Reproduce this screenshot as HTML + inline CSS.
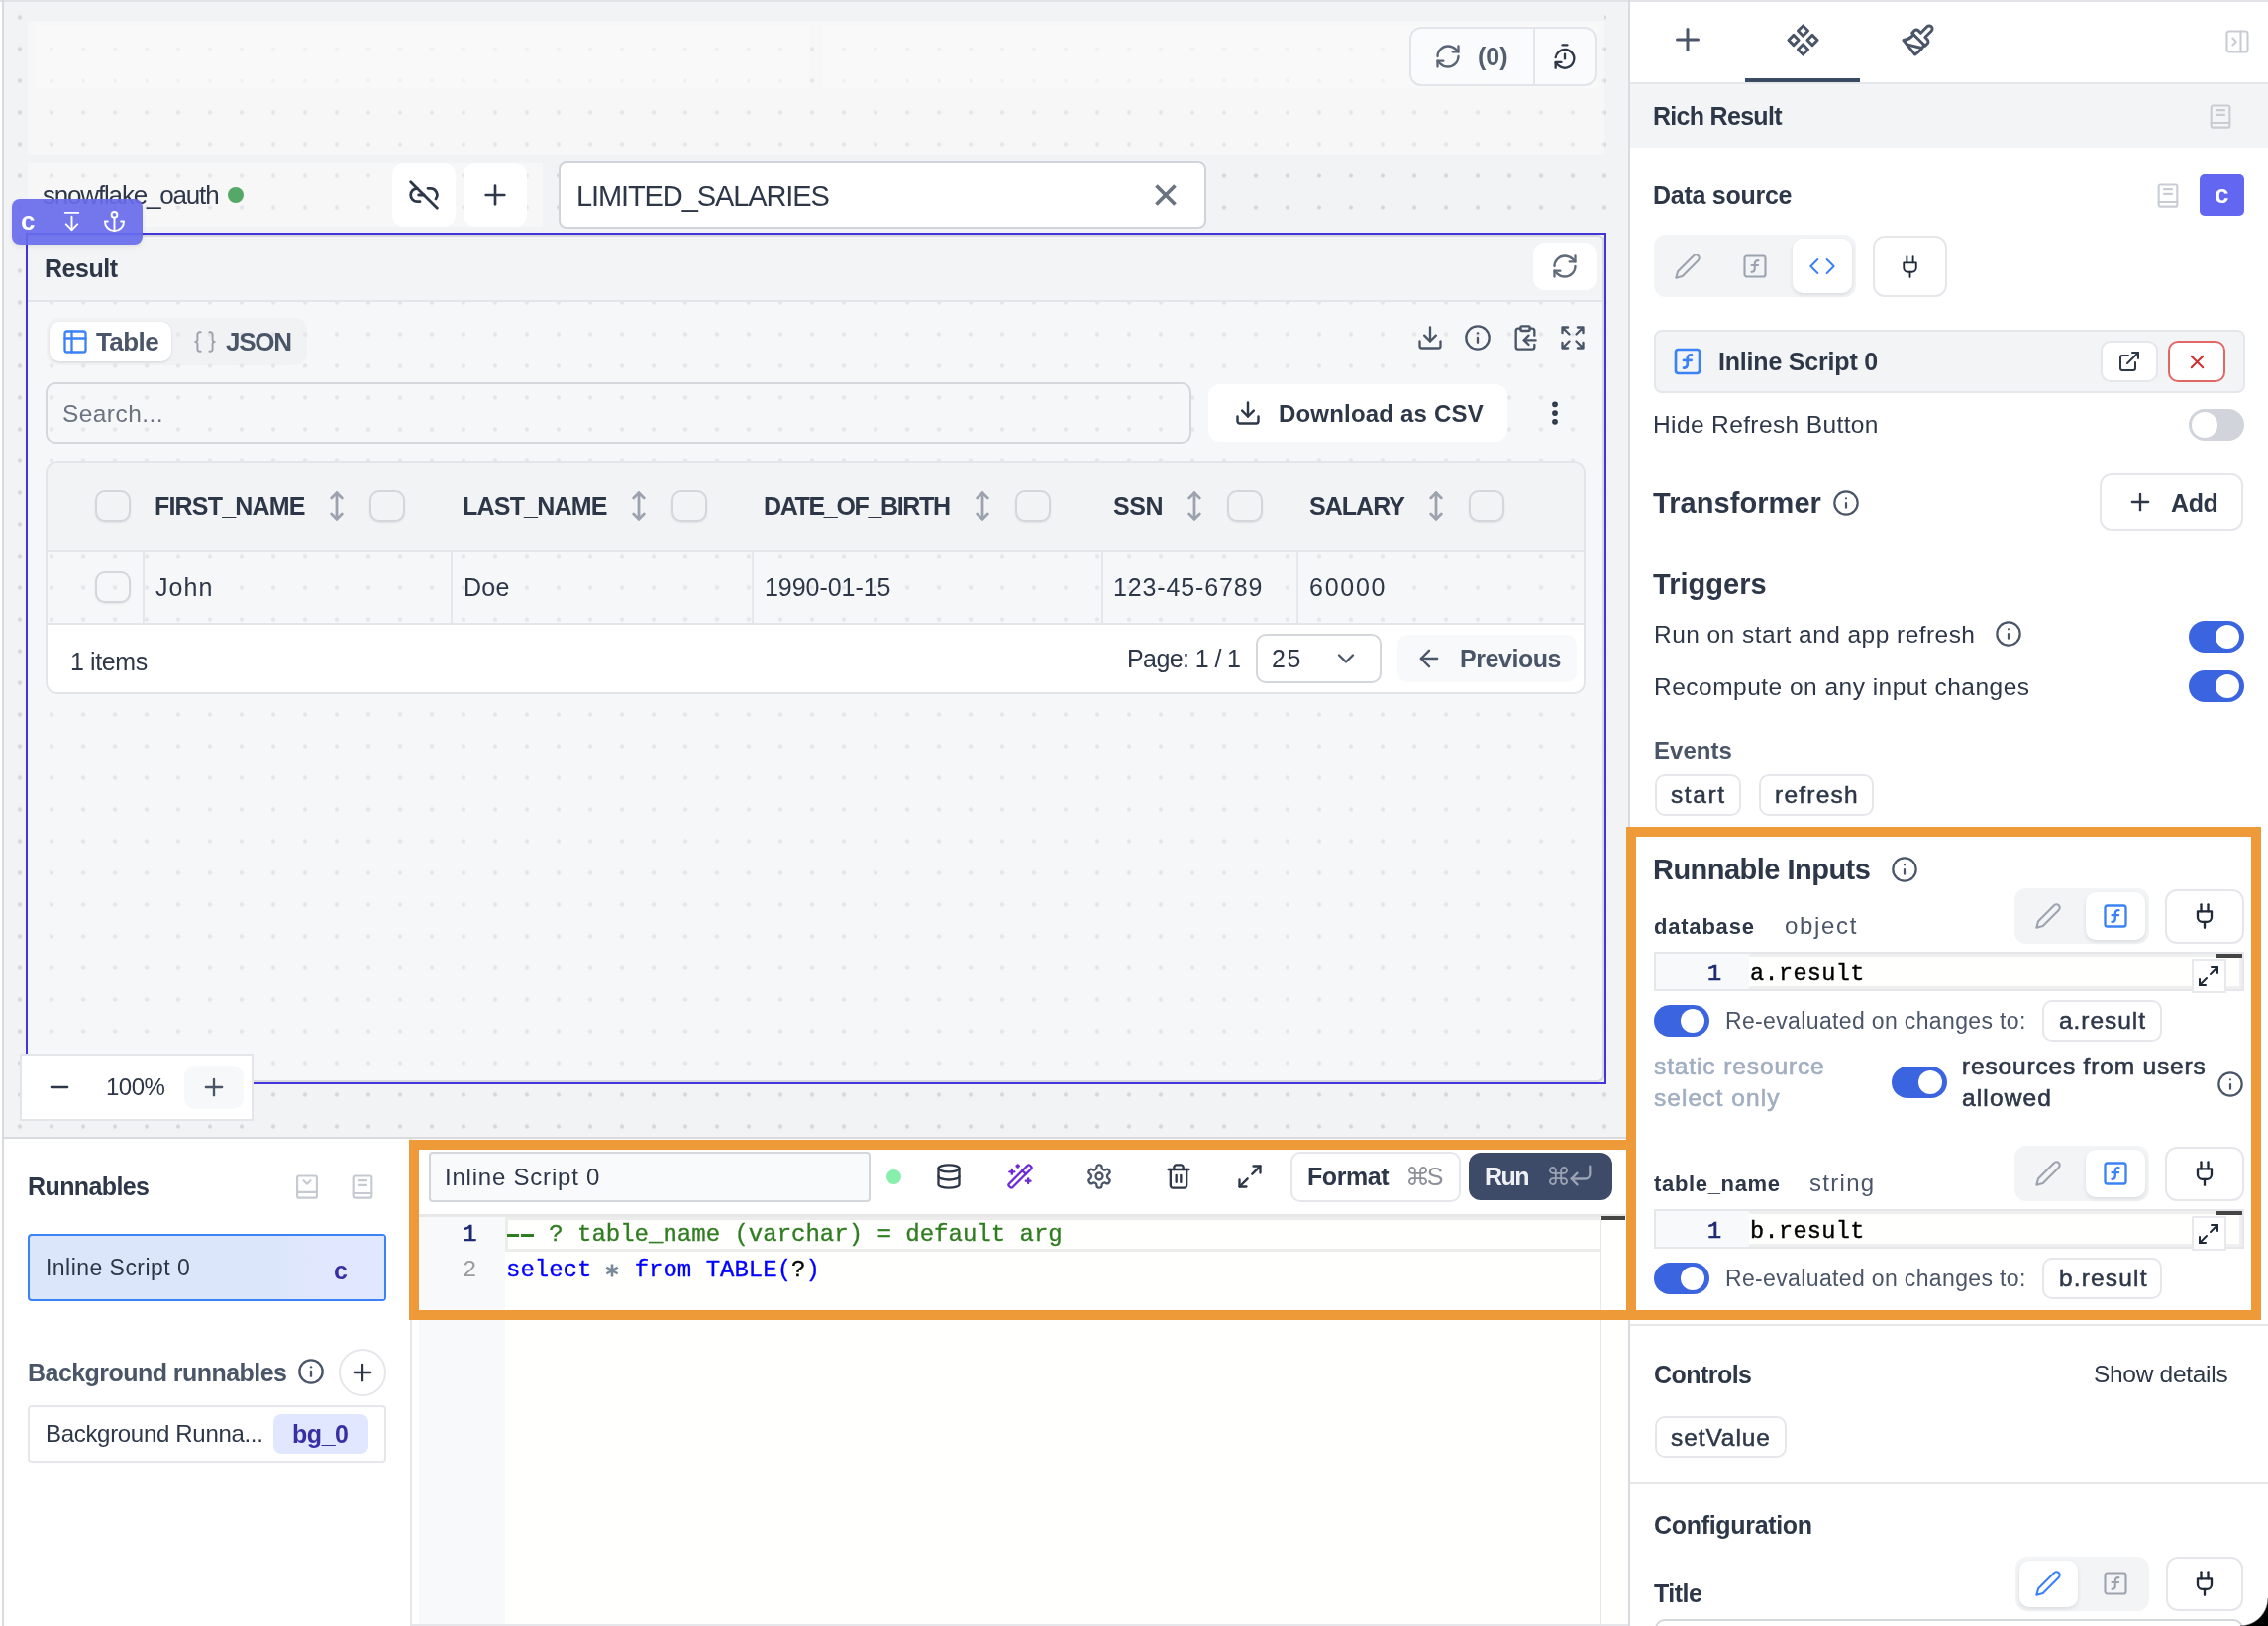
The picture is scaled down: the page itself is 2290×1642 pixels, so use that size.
<!DOCTYPE html><html><head><meta charset="utf-8"><style>
*{margin:0;padding:0;box-sizing:border-box}
html,body{width:2290px;height:1642px;overflow:hidden;background:#fff}
body{position:relative;font-family:"Liberation Sans",sans-serif}
div,span,svg{position:absolute}
.t{line-height:1;white-space:nowrap;display:block;will-change:transform}
</style></head><body><div style="left:0px;top:0px;width:2290px;height:1.5px;background:#e1e3e7"></div>
<div style="left:2px;top:0px;width:2px;height:1642px;background:#d9dadd"></div>
<div style="left:4px;top:1.5px;width:1640px;height:1146.5px;background-color:#f2f3f5;background-image:radial-gradient(circle,#d5d6d8 0,#d5d6d8 1.4px,rgba(213,214,216,0) 2.7px);background-size:32px 32px;background-position:0 -0.5px"></div>
<div style="left:4px;top:1148px;width:1640px;height:2px;background:#dadbde"></div>
<div style="left:1644px;top:0px;width:2px;height:1642px;background:#d9dbdf"></div>
<div style="left:28px;top:1.5px;width:1592px;height:19.5px;background:#f2f3f5"></div>
<div style="left:28px;top:21px;width:1592px;height:136px;background:rgba(255,255,255,0.36)"></div>
<div style="left:36px;top:25px;width:781px;height:64px;background:rgba(252,252,252,0.5)"></div>
<div style="left:831px;top:25px;width:781px;height:64px;background:rgba(252,252,252,0.5)"></div>
<div style="left:28px;top:165px;width:520px;height:64px;background:rgba(255,255,255,0.36)"></div>
<div style="left:1422.5px;top:27px;width:189.5px;height:60px;border:2px solid #e2e5e9;border-radius:12px;background:rgba(250,251,252,0.85)"></div>
<div style="left:1548px;top:29px;width:2px;height:56px;background:#e2e5e9"></div>
<svg style="left:1448.0px;top:43.0px;" width="28" height="28" viewBox="0 0 24 24" fill="none" stroke="#5b6575" stroke-width="2" stroke-linecap="round" stroke-linejoin="round"><path d="M3 12a9 9 0 0 1 9-9 9.75 9.75 0 0 1 6.74 2.74L21 8"/><path d="M21 3v5h-5"/><path d="M21 12a9 9 0 0 1-9 9 9.75 9.75 0 0 1-6.74-2.74L3 16"/><path d="M8 16H3v5"/></svg>
<span id="t_zero" class="t" style="left:1492.0px;top:44.8px;font-size:25px;color:#525d6e;font-weight:700;letter-spacing:-0.031px;">(0)</span>
<svg style="left:1566.0px;top:43.0px;" width="28" height="28" viewBox="0 0 24 24" fill="none" stroke="#2d3748" stroke-width="2" stroke-linecap="round" stroke-linejoin="round"><path d="M10 2h4"/><path d="M12 14v-4"/><path d="M4 13a8 8 0 0 1 8-7 8 8 0 1 1-5.3 14L4 17.6"/><path d="M9 17H4v5"/></svg>
<span id="t_snow" class="t" style="left:43.4px;top:184.0px;font-size:26px;color:#2d3748;letter-spacing:-1.182px;">snowflake_oauth</span>
<div style="left:230px;top:189px;width:16px;height:16px;background:#56a866;border-radius:50%"></div>
<div style="left:396px;top:165px;width:64px;height:64px;background:#fff;border-radius:12px"></div>
<svg style="left:412.0px;top:181.0px;" width="32" height="32" viewBox="0 0 24 24" fill="none" stroke="#2d3748" stroke-width="2.1" stroke-linecap="round" stroke-linejoin="round"><path d="M9 17H7A5 5 0 0 1 7 7"/><path d="M15 7h2a5 5 0 0 1 4 8"/><line x1="8" x2="12" y1="12" y2="12"/><line x1="2" x2="22" y1="2" y2="22"/></svg>
<div style="left:468px;top:165px;width:64px;height:64px;background:#fff;border-radius:12px"></div>
<svg style="left:484.0px;top:181.0px;" width="32" height="32" viewBox="0 0 24 24" fill="none" stroke="#2d3748" stroke-width="2" stroke-linecap="round" stroke-linejoin="round"><path d="M5 12h14"/><path d="M12 5v14"/></svg>
<div style="left:564px;top:163px;width:654px;height:68px;background:#fff;border:2px solid #d0d4da;border-radius:8px"></div>
<span id="t_limited" class="t" style="left:582.3px;top:184.0px;font-size:29px;color:#2d3748;letter-spacing:-1.099px;">LIMITED_SALARIES</span>
<svg style="left:1157.8px;top:177.7px;" width="38" height="38" viewBox="0 0 24 24" fill="none" stroke="#6b7280" stroke-width="2.4" stroke-linecap="round" stroke-linejoin="round"><path stroke-linecap="butt" d="M18 6 6 18"/><path stroke-linecap="butt" d="m6 6 12 12"/></svg>
<div style="left:26px;top:235px;width:1596px;height:860px;border:2px solid #4335dc"></div>
<div style="left:28px;top:237px;width:1592px;height:856px;background:rgba(252,253,255,0.4);border:2px solid #d8dadd;border-left:0;border-radius:0 7px 7px 0"></div>
<div style="left:28px;top:239px;width:1590px;height:66px;background:#f3f4f6;border-bottom:2px solid #e3e5e8;border-top-right-radius:5px"></div>
<span id="t_result" class="t" style="left:44.5px;top:259.3px;font-size:25px;color:#2d3748;font-weight:700;letter-spacing:-0.483px;">Result</span>
<div style="left:1548px;top:245px;width:64px;height:48px;background:#fff;border-radius:12px"></div>
<svg style="left:1566.0px;top:254.8px;" width="28" height="28" viewBox="0 0 24 24" fill="none" stroke="#5f6b7a" stroke-width="2" stroke-linecap="round" stroke-linejoin="round"><path d="M3 12a9 9 0 0 1 9-9 9.75 9.75 0 0 1 6.74 2.74L21 8"/><path d="M21 3v5h-5"/><path d="M21 12a9 9 0 0 1-9 9 9.75 9.75 0 0 1-6.74-2.74L3 16"/><path d="M8 16H3v5"/></svg>
<div style="left:47px;top:321px;width:263px;height:48px;background:rgba(229,231,235,0.28);border-radius:12px"></div>
<div style="left:50px;top:325px;width:123px;height:40px;background:#fff;border-radius:10px;box-shadow:0 1px 3px rgba(0,0,0,0.12)"></div>
<svg style="left:62.0px;top:330.5px;" width="28" height="28" viewBox="0 0 24 24" fill="none" stroke="#3b82f6" stroke-width="2" stroke-linecap="round" stroke-linejoin="round"><rect width="18" height="18" x="3" y="3" rx="2"/><path d="M3 9h18"/><path d="M9 3v18"/></svg>
<span id="t_tab_table" class="t" style="left:97.4px;top:332.3px;font-size:26px;color:#4a5568;font-weight:700;letter-spacing:-0.596px;">Table</span>
<svg style="left:194.0px;top:331.5px;" width="26" height="26" viewBox="0 0 24 24" fill="none" stroke="#9ca3af" stroke-width="1.8" stroke-linecap="round" stroke-linejoin="round"><path d="M8 3H7a2 2 0 0 0-2 2v5a2 2 0 0 1-2 2 2 2 0 0 1 2 2v5c0 1.1.9 2 2 2h1"/><path d="M16 21h1a2 2 0 0 0 2-2v-5c0-1.1.9-2 2-2a2 2 0 0 1-2-2V5a2 2 0 0 0-2-2h-1"/></svg>
<span id="t_tab_json" class="t" style="left:228.4px;top:332.3px;font-size:26px;color:#4a5568;font-weight:700;letter-spacing:-1.237px;">JSON</span>
<svg style="left:1429.5px;top:327.0px;" width="28" height="28" viewBox="0 0 24 24" fill="none" stroke="#4a5568" stroke-width="2" stroke-linecap="round" stroke-linejoin="round"><path d="M21 15v4a2 2 0 0 1-2 2H5a2 2 0 0 1-2-2v-4"/><polyline points="7 10 12 15 17 10"/><line x1="12" x2="12" y1="15" y2="3"/></svg>
<svg style="left:1477.5px;top:327.0px;" width="28" height="28" viewBox="0 0 24 24" fill="none" stroke="#4a5568" stroke-width="2" stroke-linecap="round" stroke-linejoin="round"><circle cx="12" cy="12" r="10"/><path d="M12 16v-4"/><path d="M12 8h.01"/></svg>
<svg style="left:1526.0px;top:327.0px;" width="28" height="28" viewBox="0 0 24 24" fill="none" stroke="#4a5568" stroke-width="2" stroke-linecap="round" stroke-linejoin="round"><rect width="8" height="4" x="8" y="2" rx="1" ry="1"/><path d="M8 4H6a2 2 0 0 0-2 2v14a2 2 0 0 0 2 2h12a2 2 0 0 0 2-2v-2"/><path d="M16 4h2a2 2 0 0 1 2 2v4"/><path d="M21 14H11"/><path d="m15 10-4 4 4 4"/></svg>
<svg style="left:1574.0px;top:327.0px;" width="28" height="28" viewBox="0 0 24 24" fill="none" stroke="#4a5568" stroke-width="2" stroke-linecap="round" stroke-linejoin="round"><path d="m21 21-6-6m6 6v-4.8m0 4.8h-4.8"/><path d="M3 16.2V21m0 0h4.8M3 21l6-6"/><path d="M21 7.8V3m0 0h-4.8M21 3l-6 6"/><path d="M3 7.8V3m0 0h4.8M3 3l6 6"/></svg>
<div style="left:46px;top:386px;width:1157px;height:62px;border:2px solid #d4d7dc;border-radius:10px"></div>
<span id="t_search" class="t" style="left:63.0px;top:405.6px;font-size:24.5px;color:#6b7280;letter-spacing:0.425px;">Search...</span>
<div style="left:1220px;top:388px;width:302px;height:58px;background:#fff;border-radius:12px"></div>
<svg style="left:1246.0px;top:403.0px;" width="28" height="28" viewBox="0 0 24 24" fill="none" stroke="#2d3748" stroke-width="2.1" stroke-linecap="round" stroke-linejoin="round"><path d="M21 15v4a2 2 0 0 1-2 2H5a2 2 0 0 1-2-2v-4"/><polyline points="7 10 12 15 17 10"/><line x1="12" x2="12" y1="15" y2="3"/></svg>
<span id="t_csv" class="t" style="left:1291.1px;top:405.7px;font-size:24px;color:#2d3748;font-weight:700;letter-spacing:0.190px;">Download as CSV</span>
<svg style="left:1555.0px;top:402.0px;" width="30" height="30" viewBox="0 0 24 24" fill="none" stroke="#2d3748" stroke-width="2.6" stroke-linecap="round" stroke-linejoin="round"><circle cx="12" cy="12" r="1"/><circle cx="12" cy="5" r="1"/><circle cx="12" cy="19" r="1"/></svg>
<div style="left:46px;top:466px;width:1555px;height:235px;border:2px solid #e3e5e8;border-radius:12px"></div>
<div style="left:48px;top:468px;width:1551px;height:88px;background:#f2f3f5;border-top-left-radius:10px;border-top-right-radius:10px"></div>
<div style="left:48px;top:555px;width:1551px;height:2px;background:#e3e5e8"></div>
<div style="left:144px;top:557px;width:2px;height:73px;background:#e5e7eb"></div>
<div style="left:455px;top:557px;width:2px;height:73px;background:#e5e7eb"></div>
<div style="left:759px;top:557px;width:2px;height:73px;background:#e5e7eb"></div>
<div style="left:1112px;top:557px;width:2px;height:73px;background:#e5e7eb"></div>
<div style="left:1309px;top:557px;width:2px;height:73px;background:#e5e7eb"></div>
<div style="left:48px;top:629px;width:1551px;height:2px;background:#e3e5e8"></div>
<div style="left:48px;top:631px;width:1551px;height:68px;background:#fff;border-bottom-left-radius:10px;border-bottom-right-radius:10px"></div>
<div style="left:96px;top:495px;width:36px;height:32px;border:2px solid #d3d6db;border-radius:10px;box-shadow:0 1px 2px rgba(0,0,0,0.08)"></div>
<div style="left:96px;top:577px;width:36px;height:32px;border:2px solid #d3d6db;border-radius:10px;box-shadow:0 1px 2px rgba(0,0,0,0.08)"></div>
<span id="t_h0" class="t" style="left:156.0px;top:499.3px;font-size:25px;color:#2d3748;font-weight:700;letter-spacing:-0.804px;">FIRST_NAME</span>
<svg style="left:324.0px;top:495.0px;" width="32" height="32" viewBox="0 0 24 24" fill="none" stroke="#9ca3af" stroke-width="2.1" stroke-linecap="round" stroke-linejoin="round"><polyline points="8 18 12 22 16 18"/><polyline points="8 6 12 2 16 6"/><line x1="12" x2="12" y1="2" y2="22"/></svg>
<div style="left:372.5px;top:495px;width:36.0px;height:32px;border:2px solid #d3d6db;border-radius:10px;box-shadow:0 1px 2px rgba(0,0,0,0.08)"></div>
<span id="t_h1" class="t" style="left:466.5px;top:499.3px;font-size:25px;color:#2d3748;font-weight:700;letter-spacing:-0.787px;">LAST_NAME</span>
<svg style="left:628.5px;top:495.0px;" width="32" height="32" viewBox="0 0 24 24" fill="none" stroke="#9ca3af" stroke-width="2.1" stroke-linecap="round" stroke-linejoin="round"><polyline points="8 18 12 22 16 18"/><polyline points="8 6 12 2 16 6"/><line x1="12" x2="12" y1="2" y2="22"/></svg>
<div style="left:677.5px;top:495px;width:36.0px;height:32px;border:2px solid #d3d6db;border-radius:10px;box-shadow:0 1px 2px rgba(0,0,0,0.08)"></div>
<span id="t_h2" class="t" style="left:771.0px;top:499.3px;font-size:25px;color:#2d3748;font-weight:700;letter-spacing:-1.343px;">DATE_OF_BIRTH</span>
<svg style="left:976.0px;top:495.0px;" width="32" height="32" viewBox="0 0 24 24" fill="none" stroke="#9ca3af" stroke-width="2.1" stroke-linecap="round" stroke-linejoin="round"><polyline points="8 18 12 22 16 18"/><polyline points="8 6 12 2 16 6"/><line x1="12" x2="12" y1="2" y2="22"/></svg>
<div style="left:1024.5px;top:495px;width:36.0px;height:32px;border:2px solid #d3d6db;border-radius:10px;box-shadow:0 1px 2px rgba(0,0,0,0.08)"></div>
<span id="t_h3" class="t" style="left:1123.5px;top:499.3px;font-size:25px;color:#2d3748;font-weight:700;letter-spacing:-0.453px;">SSN</span>
<svg style="left:1190.0px;top:495.0px;" width="32" height="32" viewBox="0 0 24 24" fill="none" stroke="#9ca3af" stroke-width="2.1" stroke-linecap="round" stroke-linejoin="round"><polyline points="8 18 12 22 16 18"/><polyline points="8 6 12 2 16 6"/><line x1="12" x2="12" y1="2" y2="22"/></svg>
<div style="left:1238.5px;top:495px;width:36.0px;height:32px;border:2px solid #d3d6db;border-radius:10px;box-shadow:0 1px 2px rgba(0,0,0,0.08)"></div>
<span id="t_h4" class="t" style="left:1321.5px;top:499.3px;font-size:25px;color:#2d3748;font-weight:700;letter-spacing:-0.973px;">SALARY</span>
<svg style="left:1434.0px;top:495.0px;" width="32" height="32" viewBox="0 0 24 24" fill="none" stroke="#9ca3af" stroke-width="2.1" stroke-linecap="round" stroke-linejoin="round"><polyline points="8 18 12 22 16 18"/><polyline points="8 6 12 2 16 6"/><line x1="12" x2="12" y1="2" y2="22"/></svg>
<div style="left:1482.5px;top:495px;width:36.0px;height:32px;border:2px solid #d3d6db;border-radius:10px;box-shadow:0 1px 2px rgba(0,0,0,0.08)"></div>
<span id="t_c0" class="t" style="left:157.2px;top:580.8px;font-size:25px;color:#2d3748;letter-spacing:1.092px;">John</span>
<span id="t_c1" class="t" style="left:468.0px;top:580.8px;font-size:25px;color:#2d3748;letter-spacing:0.315px;">Doe</span>
<span id="t_c2" class="t" style="left:771.8px;top:580.8px;font-size:25px;color:#2d3748;letter-spacing:-0.043px;">1990-01-15</span>
<span id="t_c3" class="t" style="left:1124.0px;top:580.8px;font-size:25px;color:#2d3748;letter-spacing:0.871px;">123-45-6789</span>
<span id="t_c4" class="t" style="left:1322.2px;top:580.8px;font-size:25px;color:#2d3748;letter-spacing:1.743px;">60000</span>
<span id="t_items" class="t" style="left:71.3px;top:655.8px;font-size:25px;color:#2d3748;letter-spacing:-0.381px;">1 items</span>
<span id="t_page" class="t" style="left:1137.5px;top:653.1px;font-size:25px;color:#2d3748;letter-spacing:-0.593px;">Page: 1 / 1</span>
<div style="left:1268px;top:639.5px;width:126.5px;height:50.5px;background:#fff;border:2px solid #d3d6db;border-radius:10px"></div>
<span id="t_pp" class="t" style="left:1284.0px;top:653.1px;font-size:25px;color:#2d3748;letter-spacing:1.686px;">25</span>
<svg style="left:1345.0px;top:650.5px;" width="28" height="28" viewBox="0 0 24 24" fill="none" stroke="#4a5568" stroke-width="2" stroke-linecap="round" stroke-linejoin="round"><path d="m6 9 6 6 6-6"/></svg>
<div style="left:1411px;top:641px;width:181px;height:48px;background:#f8f9fa;border-radius:10px"></div>
<svg style="left:1428.5px;top:651.0px;" width="28" height="28" viewBox="0 0 24 24" fill="none" stroke="#4a5568" stroke-width="2" stroke-linecap="round" stroke-linejoin="round"><path d="m12 19-7-7 7-7"/><path d="M19 12H5"/></svg>
<span id="t_prev" class="t" style="left:1473.5px;top:653.1px;font-size:25px;color:#4a5568;font-weight:700;letter-spacing:-0.444px;">Previous</span>
<div style="left:12px;top:201px;width:132px;height:46px;background:rgba(104,107,234,0.92);border-radius:8px;box-shadow:0 2px 4px rgba(0,0,0,0.08)"></div>
<span id="t_badge_c" class="t" style="left:20.9px;top:210.0px;font-size:26px;color:#fff;font-weight:700;">c</span>
<svg style="left:60.5px;top:211.5px;" width="23" height="23" viewBox="0 0 24 24" fill="none" stroke="#fff" stroke-width="2" stroke-linecap="round" stroke-linejoin="round"><path d="M19 3H5"/><path d="M12 21V7"/><path d="m6 15 6 6 6-6"/></svg>
<svg style="left:103.5px;top:211.5px;" width="23" height="23" viewBox="0 0 24 24" fill="none" stroke="#fff" stroke-width="2" stroke-linecap="round" stroke-linejoin="round"><circle cx="12" cy="5" r="3"/><line x1="12" x2="12" y1="22" y2="8"/><path d="M5 12H2a10 10 0 0 0 20 0h-3"/></svg>
<div style="left:20px;top:1064px;width:236px;height:68px;background:#fff;border:2px solid #e3e5e8"></div>
<svg style="left:46.0px;top:1084.0px;" width="28" height="28" viewBox="0 0 24 24" fill="none" stroke="#2d3748" stroke-width="2" stroke-linecap="round" stroke-linejoin="round"><path d="M5 12h14"/></svg>
<span id="t_zoompct" class="t" style="left:107.2px;top:1086.0px;font-size:24px;color:#2d3748;letter-spacing:-0.497px;">100%</span>
<div style="left:186px;top:1076px;width:60px;height:44px;background:#f7f8f9;border-radius:12px"></div>
<svg style="left:202.0px;top:1084.0px;" width="28" height="28" viewBox="0 0 24 24" fill="none" stroke="#4a5568" stroke-width="2" stroke-linecap="round" stroke-linejoin="round"><path d="M5 12h14"/><path d="M12 5v14"/></svg>
<div style="left:4px;top:1150px;width:410px;height:492px;background:#fff"></div>
<div style="left:414px;top:1150px;width:2px;height:492px;background:#e5e7eb"></div>
<span id="t_runnables" class="t" style="left:27.5px;top:1186.0px;font-size:25px;color:#2d3748;font-weight:700;letter-spacing:-0.600px;">Runnables</span>
<svg style="left:295.7px;top:1183.5px;" width="28" height="28" viewBox="0 0 24 24" fill="none" stroke="#c5cad1" stroke-width="1.8" stroke-linecap="round" stroke-linejoin="round"><path d="M3.5 20.5V4.5A1.5 1.5 0 0 1 5 3h14A1.5 1.5 0 0 1 20.5 4.5v16A1.5 1.5 0 0 1 19 22H5A1.5 1.5 0 0 1 3.5 20.5Z"/><path d="M3.5 17h17"/><path d="m9 7 3 3 3-3"/></svg>
<svg style="left:351.7px;top:1183.5px;" width="28" height="28" viewBox="0 0 24 24" fill="none" stroke="#c5cad1" stroke-width="1.8" stroke-linecap="round" stroke-linejoin="round"><path d="M4 20.5V4.5A1.5 1.5 0 0 1 5.5 3h13A1.5 1.5 0 0 1 20 4.5v16A1.5 1.5 0 0 1 18.5 22h-13A1.5 1.5 0 0 1 4 20.5Z"/><path d="M4 18h16"/><path d="M8.5 7h7"/><path d="M8.5 11h7"/></svg>
<div style="left:28px;top:1246px;width:362px;height:68px;background:#dce6fb;border:2px solid #3b82f6;border-radius:4px"></div>
<div style="left:280px;top:1248px;width:108px;height:64px;background:linear-gradient(90deg,rgba(226,232,255,0),rgba(226,232,255,0.75) 40%)"></div>
<span id="t_rs0" class="t" style="left:45.6px;top:1268.6px;font-size:23px;color:#2d3748;letter-spacing:0.461px;">Inline Script 0</span>
<span id="t_rs0c" class="t" style="left:336.9px;top:1270.8px;font-size:25px;color:#3730a3;font-weight:700;">c</span>
<span id="t_bgr" class="t" style="left:27.5px;top:1374.3px;font-size:25px;color:#4a5568;font-weight:700;letter-spacing:-0.540px;">Background runnables</span>
<svg style="left:300.0px;top:1371.0px;" width="28" height="28" viewBox="0 0 24 24" fill="none" stroke="#4a5568" stroke-width="2" stroke-linecap="round" stroke-linejoin="round"><circle cx="12" cy="12" r="10"/><path d="M12 16v-4"/><path d="M12 8h.01"/></svg>
<div style="left:342px;top:1362px;width:47.5px;height:47.5px;border:2px solid #e5e7eb;border-radius:50%"></div>
<svg style="left:351.7px;top:1371.7px;" width="28" height="28" viewBox="0 0 24 24" fill="none" stroke="#2d3748" stroke-width="2" stroke-linecap="round" stroke-linejoin="round"><path d="M5 12h14"/><path d="M12 5v14"/></svg>
<div style="left:28px;top:1419px;width:362px;height:58px;border:2px solid #e5e7eb;border-radius:4px"></div>
<span id="t_bgitem" class="t" style="left:45.6px;top:1436.2px;font-size:24px;color:#2d3748;letter-spacing:-0.310px;">Background Runna...</span>
<div style="left:276px;top:1428px;width:96px;height:40px;background:#e0e7ff;border-radius:8px"></div>
<span id="t_bg0" class="t" style="left:295.2px;top:1435.8px;font-size:25px;color:#3730a3;font-weight:700;letter-spacing:-0.453px;">bg_0</span>
<div style="left:416px;top:1150px;width:1228px;height:492px;background:#fff"></div>
<div style="left:432.5px;top:1162.5px;width:446.0px;height:51.0px;background:#f9fafb;border:2px solid #d3d6db;border-radius:4px"></div>
<span id="t_ename" class="t" style="left:449.4px;top:1177.2px;font-size:24px;color:#2d3748;letter-spacing:0.785px;">Inline Script 0</span>
<div style="left:895px;top:1180.5px;width:15px;height:15.0px;background:#86efac;border-radius:50%"></div>
<svg style="left:944.0px;top:1173.5px;" width="28" height="28" viewBox="0 0 24 24" fill="none" stroke="#2d3748" stroke-width="2" stroke-linecap="round" stroke-linejoin="round"><ellipse cx="12" cy="5" rx="9" ry="3"/><path d="M3 5V19A9 3 0 0 0 21 19V5"/><path d="M3 12A9 3 0 0 0 21 12"/></svg>
<svg style="left:1016.0px;top:1173.5px;" width="28" height="28" viewBox="0 0 24 24" fill="none" stroke="#6d28d9" stroke-width="2" stroke-linecap="round" stroke-linejoin="round"><path d="m21.64 3.64-1.28-1.28a1.21 1.21 0 0 0-1.72 0L2.36 18.64a1.21 1.21 0 0 0 0 1.72l1.28 1.28a1.2 1.2 0 0 0 1.72 0L21.64 5.36a1.2 1.2 0 0 0 0-1.72Z"/><path d="m14 7 3 3"/><path d="M5 6v4"/><path d="M19 14v4"/><path d="M10 2v2"/><path d="M7 8H3"/><path d="M21 16h-4"/><path d="M11 3H9"/></svg>
<svg style="left:1096.0px;top:1173.5px;" width="28" height="28" viewBox="0 0 24 24" fill="none" stroke="#4a5568" stroke-width="2" stroke-linecap="round" stroke-linejoin="round"><path d="M12.22 2h-.44a2 2 0 0 0-2 2v.18a2 2 0 0 1-1 1.73l-.43.25a2 2 0 0 1-2 0l-.15-.08a2 2 0 0 0-2.73.73l-.22.38a2 2 0 0 0 .73 2.73l.15.1a2 2 0 0 1 1 1.72v.51a2 2 0 0 1-1 1.74l-.15.09a2 2 0 0 0-.73 2.73l.22.38a2 2 0 0 0 2.73.73l.15-.08a2 2 0 0 1 2 0l.43.25a2 2 0 0 1 1 1.73V20a2 2 0 0 0 2 2h.44a2 2 0 0 0 2-2v-.18a2 2 0 0 1 1-1.73l.43-.25a2 2 0 0 1 2 0l.15.08a2 2 0 0 0 2.73-.73l.22-.39a2 2 0 0 0-.73-2.73l-.15-.08a2 2 0 0 1-1-1.74v-.5a2 2 0 0 1 1-1.74l.15-.09a2 2 0 0 0 .73-2.73l-.22-.38a2 2 0 0 0-2.73-.73l-.15.08a2 2 0 0 1-2 0l-.43-.25a2 2 0 0 1-1-1.73V4a2 2 0 0 0-2-2z"/><circle cx="12" cy="12" r="3"/></svg>
<svg style="left:1176.0px;top:1173.5px;" width="28" height="28" viewBox="0 0 24 24" fill="none" stroke="#2d3748" stroke-width="2" stroke-linecap="round" stroke-linejoin="round"><path d="M3 6h18"/><path d="M19 6v14c0 1-1 2-2 2H7c-1 0-2-1-2-2V6"/><path d="M8 6V4c0-1 1-2 2-2h4c1 0 2 1 2 2v2"/><line x1="10" x2="10" y1="11" y2="17"/><line x1="14" x2="14" y1="11" y2="17"/></svg>
<svg style="left:1248.0px;top:1173.5px;" width="28" height="28" viewBox="0 0 24 24" fill="none" stroke="#2d3748" stroke-width="2" stroke-linecap="round" stroke-linejoin="round"><polyline points="15 3 21 3 21 9"/><polyline points="9 21 3 21 3 15"/><line x1="21" x2="14" y1="3" y2="10"/><line x1="3" x2="10" y1="21" y2="14"/></svg>
<div style="left:1302.5px;top:1163px;width:172.0px;height:50.5px;background:#fff;border:2px solid #e5e7eb;border-radius:10px"></div>
<span id="t_format" class="t" style="left:1319.8px;top:1176.3px;font-size:25px;color:#2d3748;font-weight:700;letter-spacing:-0.449px;">Format</span>
<span id="t_fmtk" class="t" style="left:1418.5px;top:1176.3px;font-size:25px;color:#8b9099;letter-spacing:-3.188px;">⌘S</span>
<div style="left:1483px;top:1164px;width:145px;height:48px;background:#3d4b69;border-radius:12px"></div>
<span id="t_run" class="t" style="left:1498.5px;top:1176.3px;font-size:25px;color:#eef0f3;font-weight:700;letter-spacing:-1.549px;">Run</span>
<span id="t_runk" class="t" style="left:1560.5px;top:1176.3px;font-size:25px;color:#9aa3b3;">⌘</span>
<svg style="left:1582.0px;top:1173.0px;" width="28" height="28" viewBox="0 0 24 24" fill="none" stroke="#9aa3b3" stroke-width="2" stroke-linecap="round" stroke-linejoin="round"><polyline points="9 10 4 15 9 20"/><path d="M20 4v7a4 4 0 0 1-4 4H4"/></svg>
<div style="left:416px;top:1226px;width:1228px;height:2.5px;background:#e8e8e8"></div>
<div style="left:423px;top:1228.5px;width:87px;height:413.5px;background:#f8f9fb"></div>
<div style="left:510px;top:1228.5px;width:1134px;height:413.5px;background:#fffffe"></div>
<div style="left:510px;top:1228.5px;width:1106px;height:35.5px;border:3.5px solid #ececec;border-right:0"></div>
<div style="left:1616px;top:1231px;width:1px;height:411px;background:#e8e8e8"></div>
<div style="left:1617px;top:1228px;width:24px;height:4px;background:#454545"></div>
<div style="left:416px;top:1640px;width:1228px;height:2px;background:#e5e7eb"></div>
<span id="t_ln1" class="t" style="left:467.0px;top:1235.2px;font-size:24px;color:#1c2a74;font-family:'Liberation Mono',monospace;-webkit-text-stroke:0.7px #1c2a74;">1</span>
<span id="t_ln2" class="t" style="left:467.0px;top:1270.6px;font-size:24px;color:#9b9b9b;font-family:'Liberation Mono',monospace;">2</span>
<span id="t_code1" class="t" style="left:511.0px;top:1235.2px;font-size:24px;color:#2f7d20;font-family:'Liberation Mono',monospace;white-space:pre;-webkit-text-stroke:0.35px #2f7d20;">   ? table_name (varchar) = default arg</span>
<div style="left:511.5px;top:1245.5px;width:12.5px;height:3.0px;background:#2f7d20"></div>
<div style="left:526px;top:1245.5px;width:12.5px;height:3.0px;background:#2f7d20"></div>
<span id="t_code2" class="t" style="left:511.0px;top:1270.6px;font-size:24px;color:#000;font-family:'Liberation Mono',monospace;white-space:pre;-webkit-text-stroke:0.35px currentColor;"><span style="position:static;color:#0000ff">select</span> <span style="position:static;color:#778899"> </span> <span style="position:static;color:#0000ff">from</span> <span style="position:static;color:#0000ff">TABLE(</span><span style="position:static;color:#000">?</span><span style="position:static;color:#0000ff">)</span></span>
<svg style="left:610px;top:1274.5px" width="16" height="16" viewBox="0 0 16 16" fill="none" stroke="#778899" stroke-width="2.6" stroke-linecap="butt"><path d="M8 1.5v13M2.4 4.75l11.2 6.5M2.4 11.25l11.2-6.5"/></svg>
<div style="left:1646px;top:1.5px;width:644px;height:1640.5px;background:#fff"></div>
<div style="left:1646px;top:83px;width:644px;height:2px;background:#e5e7eb"></div>
<svg style="left:1686.0px;top:22.0px;" width="36" height="36" viewBox="0 0 24 24" fill="none" stroke="#4a5568" stroke-width="2" stroke-linecap="round" stroke-linejoin="round"><path d="M5 12h14"/><path d="M12 5v14"/></svg>
<svg style="left:1802.5px;top:22.5px;" width="35" height="35" viewBox="0 0 24 24" fill="none" stroke="#4a5568" stroke-width="2" stroke-linecap="round" stroke-linejoin="round"><path d="M5.5 8.5 9 12l-3.5 3.5L2 12l3.5-3.5Z"/><path d="m12 2 3.5 3.5L12 9 8.5 5.5 12 2Z"/><path d="M18.5 8.5 22 12l-3.5 3.5L15 12l3.5-3.5Z"/><path d="m12 15 3.5 3.5L12 22l-3.5-3.5L12 15Z"/></svg>
<svg style="left:1918.5px;top:23.0px;" width="35" height="35" viewBox="0 0 24 24" fill="none" stroke="#4a5568" stroke-width="2" stroke-linecap="round" stroke-linejoin="round"><path d="M18.37 2.63 14 7l-1.59-1.59a2 2 0 0 0-2.82 0L8 7l9 9 1.59-1.59a2 2 0 0 0 0-2.82L17 10l4.37-4.37a2.12 2.12 0 1 0-3-3Z"/><path d="M9 8c-2 3-4 3.5-7 4l8 10c2-1 6-5 6-7"/><path d="M14.5 17.5 4.5 15"/></svg>
<div style="left:1762px;top:79px;width:116px;height:4px;background:#3b4a63"></div>
<svg style="left:2244.5px;top:28.0px;" width="28" height="28" viewBox="0 0 24 24" fill="none" stroke="#c9cdd3" stroke-width="1.8" stroke-linecap="round" stroke-linejoin="round"><rect width="18" height="18" x="3" y="3" rx="2"/><path d="M15 3v18"/><path d="m8 9 3 3-3 3"/></svg>
<div style="left:1646px;top:85px;width:644px;height:64px;background:#f3f4f6"></div>
<span id="t_rich" class="t" style="left:1669.0px;top:105.1px;font-size:25px;color:#2d3748;font-weight:700;letter-spacing:-0.703px;">Rich Result</span>
<svg style="left:2228.0px;top:103.0px;" width="28" height="28" viewBox="0 0 24 24" fill="none" stroke="#c9cdd3" stroke-width="1.8" stroke-linecap="round" stroke-linejoin="round"><path d="M4 20.5V4.5A1.5 1.5 0 0 1 5.5 3h13A1.5 1.5 0 0 1 20 4.5v16A1.5 1.5 0 0 1 18.5 22h-13A1.5 1.5 0 0 1 4 20.5Z"/><path d="M4 18h16"/><path d="M8.5 7h7"/><path d="M8.5 11h7"/></svg>
<span id="t_ds" class="t" style="left:1669.0px;top:185.1px;font-size:25px;color:#2d3748;font-weight:700;letter-spacing:-0.263px;">Data source</span>
<svg style="left:2175.0px;top:183.0px;" width="28" height="28" viewBox="0 0 24 24" fill="none" stroke="#c9cdd3" stroke-width="1.8" stroke-linecap="round" stroke-linejoin="round"><path d="M4 20.5V4.5A1.5 1.5 0 0 1 5.5 3h13A1.5 1.5 0 0 1 20 4.5v16A1.5 1.5 0 0 1 18.5 22h-13A1.5 1.5 0 0 1 4 20.5Z"/><path d="M4 18h16"/><path d="M8.5 7h7"/><path d="M8.5 11h7"/></svg>
<div style="left:2221px;top:176px;width:45px;height:41.5px;background:#6366f1;border-radius:5px"></div>
<span id="t_dsc" class="t" style="left:2236.4px;top:183.0px;font-size:26px;color:#fff;font-weight:700;">c</span>
<div style="left:1670px;top:237px;width:204px;height:63px;background:#f3f4f6;border-radius:12px"></div>
<div style="left:1810px;top:241px;width:60px;height:55px;background:#fff;border-radius:10px;box-shadow:0 2px 4px rgba(0,0,0,0.10)"></div>
<svg style="left:1690.0px;top:254.5px;" width="28" height="28" viewBox="0 0 24 24" fill="none" stroke="#9ca3af" stroke-width="1.8" stroke-linecap="round" stroke-linejoin="round"><path d="M17 3a2.85 2.83 0 1 1 4 4L7.5 20.5 2 22l1.5-5.5Z"/></svg>
<svg style="left:1758.0px;top:254.5px;" width="28" height="28" viewBox="0 0 24 24" fill="none" stroke="#9ca3af" stroke-width="1.8" stroke-linecap="round" stroke-linejoin="round"><rect width="18" height="18" x="3" y="3" rx="2" ry="2"/><path d="M9 17c2 0 2.8-1 2.8-2.8V10c0-2 1-3.3 3.2-3"/><path d="M9 11.2h5.7"/></svg>
<svg style="left:1826.0px;top:254.5px;" width="28" height="28" viewBox="0 0 24 24" fill="none" stroke="#3b82f6" stroke-width="1.7" stroke-linecap="round" stroke-linejoin="round"><polyline points="16 18 22 12 16 6"/><polyline points="8 6 2 12 8 18"/></svg>
<div style="left:1890.5px;top:237.5px;width:75.0px;height:62.0px;border:2px solid #e5e7eb;border-radius:12px"></div>
<svg style="left:1915.5px;top:256.5px;" width="25" height="25" viewBox="0 0 24 24" fill="none" stroke="#1f2937" stroke-width="1.8" stroke-linecap="round" stroke-linejoin="round"><path d="M12 22v-5"/><path d="M9 8V2"/><path d="M15 8V2"/><path d="M18 8v5a4 4 0 0 1-4 4h-4a4 4 0 0 1-4-4V8Z"/></svg>
<div style="left:1670px;top:333px;width:597px;height:64px;background:#f3f4f6;border:2px solid #e5e7eb;border-radius:8px"></div>
<svg style="left:1688.0px;top:349.0px;" width="32" height="32" viewBox="0 0 24 24" fill="none" stroke="#3b82f6" stroke-width="2" stroke-linecap="round" stroke-linejoin="round"><rect width="18" height="18" x="3" y="3" rx="2" ry="2"/><path d="M9 17c2 0 2.8-1 2.8-2.8V10c0-2 1-3.3 3.2-3"/><path d="M9 11.2h5.7"/></svg>
<span id="t_dsname" class="t" style="left:1734.8px;top:353.1px;font-size:25px;color:#2d3748;font-weight:700;letter-spacing:-0.196px;">Inline Script 0</span>
<div style="left:2121px;top:344px;width:58px;height:42px;background:#fff;border:2px solid #e5e7eb;border-radius:10px"></div>
<svg style="left:2138.0px;top:353.0px;" width="24" height="24" viewBox="0 0 24 24" fill="none" stroke="#2d3748" stroke-width="2" stroke-linecap="round" stroke-linejoin="round"><path d="M15 3h6v6"/><path d="M10 14 21 3"/><path d="M18 13v6a2 2 0 0 1-2 2H5a2 2 0 0 1-2-2V8a2 2 0 0 1 2-2h6"/></svg>
<div style="left:2189px;top:344px;width:58px;height:42px;background:#fff;border:2px solid #e26767;border-radius:10px"></div>
<svg style="left:2206.5px;top:353.5px;" width="23" height="23" viewBox="0 0 24 24" fill="none" stroke="#cf2d2d" stroke-width="2" stroke-linecap="round" stroke-linejoin="round"><path d="M18 6 6 18"/><path d="m6 6 12 12"/></svg>
<span id="t_hide" class="t" style="left:1669.0px;top:417.3px;font-size:24.5px;color:#2d3748;letter-spacing:0.379px;">Hide Refresh Button</span>
<div style="left:2210px;top:413px;width:56px;height:32px;background:#d1d5db;border-radius:16px"></div>
<div style="left:2213px;top:416px;width:26px;height:26px;background:#fff;border-radius:50%"></div>
<span id="t_transf" class="t" style="left:1668.8px;top:493.8px;font-size:29px;color:#2d3748;font-weight:700;letter-spacing:0.067px;">Transformer</span>
<svg style="left:1850.0px;top:494.0px;" width="28" height="28" viewBox="0 0 24 24" fill="none" stroke="#4a5568" stroke-width="1.9" stroke-linecap="round" stroke-linejoin="round"><circle cx="12" cy="12" r="10"/><path d="M12 16v-4"/><path d="M12 8h.01"/></svg>
<div style="left:2120px;top:478px;width:145px;height:58px;border:2px solid #e5e7eb;border-radius:12px"></div>
<svg style="left:2147.0px;top:493.0px;" width="28" height="28" viewBox="0 0 24 24" fill="none" stroke="#2d3748" stroke-width="2" stroke-linecap="round" stroke-linejoin="round"><path d="M5 12h14"/><path d="M12 5v14"/></svg>
<span id="t_add" class="t" style="left:2192.2px;top:495.5px;font-size:25px;color:#2d3748;font-weight:700;letter-spacing:-0.400px;">Add</span>
<span id="t_triggers" class="t" style="left:1669.3px;top:575.9px;font-size:29px;color:#2d3748;font-weight:700;letter-spacing:0.023px;">Triggers</span>
<span id="t_runstart" class="t" style="left:1669.5px;top:629.0px;font-size:24.5px;color:#2d3748;letter-spacing:0.447px;">Run on start and app refresh</span>
<svg style="left:2014.0px;top:626.0px;" width="28" height="28" viewBox="0 0 24 24" fill="none" stroke="#4a5568" stroke-width="1.9" stroke-linecap="round" stroke-linejoin="round"><circle cx="12" cy="12" r="10"/><path d="M12 16v-4"/><path d="M12 8h.01"/></svg>
<div style="left:2210px;top:627px;width:56px;height:32px;background:#3b64e0;border-radius:16px"></div>
<div style="left:2237px;top:631px;width:24px;height:24px;background:#fff;border-radius:50%"></div>
<span id="t_recomp" class="t" style="left:1669.5px;top:681.5px;font-size:24.5px;color:#2d3748;letter-spacing:0.484px;">Recompute on any input changes</span>
<div style="left:2210px;top:677px;width:56px;height:32px;background:#3b64e0;border-radius:16px"></div>
<div style="left:2237px;top:681px;width:24px;height:24px;background:#fff;border-radius:50%"></div>
<span id="t_events" class="t" style="left:1669.6px;top:745.7px;font-size:24px;color:#4a5568;font-weight:700;letter-spacing:0.039px;">Events</span>
<div style="left:1671px;top:781.5px;width:87px;height:42.5px;border:2px solid #e5e7eb;border-radius:10px"></div>
<span id="t_ev_start" class="t" style="left:1687.2px;top:791.3px;font-size:24.5px;color:#2d3748;letter-spacing:1.598px;-webkit-text-stroke:0.5px #2d3748;">start</span>
<div style="left:1775.5px;top:781.5px;width:116.5px;height:42.5px;border:2px solid #e5e7eb;border-radius:10px"></div>
<span id="t_ev_refresh" class="t" style="left:1791.8px;top:791.3px;font-size:24.5px;color:#2d3748;letter-spacing:1.231px;-webkit-text-stroke:0.5px #2d3748;">refresh</span>
<span id="t_rinputs" class="t" style="left:1669.3px;top:863.8px;font-size:29px;color:#2d3748;font-weight:700;letter-spacing:-0.519px;">Runnable Inputs</span>
<svg style="left:1909.0px;top:864.0px;" width="28" height="28" viewBox="0 0 24 24" fill="none" stroke="#4a5568" stroke-width="1.9" stroke-linecap="round" stroke-linejoin="round"><circle cx="12" cy="12" r="10"/><path d="M12 16v-4"/><path d="M12 8h.01"/></svg>
<span id="t_i1_name" class="t" style="left:1669.7px;top:924.9px;font-size:22px;color:#2d3748;font-weight:700;letter-spacing:0.787px;">database</span>
<span id="t_i1_type" class="t" style="left:1801.6px;top:923.2px;font-size:24px;color:#4a5568;letter-spacing:1.670px;">object</span>
<div style="left:2034px;top:897px;width:135.5px;height:55.5px;background:#f3f4f6;border-radius:12px"></div>
<div style="left:2106px;top:901px;width:60px;height:47.5px;background:#fff;border-radius:10px;box-shadow:0 2px 4px rgba(0,0,0,0.10)"></div>
<svg style="left:2054.0px;top:910.5px;" width="28" height="28" viewBox="0 0 24 24" fill="none" stroke="#9ca3af" stroke-width="1.8" stroke-linecap="round" stroke-linejoin="round"><path d="M17 3a2.85 2.83 0 1 1 4 4L7.5 20.5 2 22l1.5-5.5Z"/></svg>
<svg style="left:2122.0px;top:910.5px;" width="28" height="28" viewBox="0 0 24 24" fill="none" stroke="#3b82f6" stroke-width="2" stroke-linecap="round" stroke-linejoin="round"><rect width="18" height="18" x="3" y="3" rx="2" ry="2"/><path d="M9 17c2 0 2.8-1 2.8-2.8V10c0-2 1-3.3 3.2-3"/><path d="M9 11.2h5.7"/></svg>
<div style="left:2186px;top:897.5px;width:79.5px;height:55.0px;border:2px solid #e5e7eb;border-radius:12px"></div>
<svg style="left:2212.0px;top:911.0px;" width="28" height="28" viewBox="0 0 24 24" fill="none" stroke="#1f2937" stroke-width="2" stroke-linecap="round" stroke-linejoin="round"><path d="M12 22v-5"/><path d="M9 8V2"/><path d="M15 8V2"/><path d="M18 8v5a4 4 0 0 1-4 4h-4a4 4 0 0 1-4-4V8Z"/></svg>
<div style="left:1670px;top:961px;width:596px;height:39.5px;background:#fffffe;border:2px solid #e5e7eb"></div>
<div style="left:1672px;top:963px;width:94px;height:35.5px;background:#f8f9fb"></div>
<div style="left:1766px;top:963px;width:498px;height:35.5px;border:3.5px solid #efeff0;border-left:0"></div>
<div style="left:2237px;top:963px;width:27px;height:4px;background:#454545"></div>
<span id="t_i1_ln" class="t" style="left:1723.7px;top:971.8px;font-size:23.5px;color:#1c2a74;font-family:'Liberation Mono',monospace;-webkit-text-stroke:0.7px #1c2a74;">1</span>
<span id="t_i1_code" class="t" style="left:1766.5px;top:971.8px;font-size:23.5px;color:#000;font-family:'Liberation Mono',monospace;letter-spacing:0.361px;-webkit-text-stroke:0.4px #000;">a.result</span>
<div style="left:2212.5px;top:967.5px;width:35.0px;height:35.5px;background:#fff;border:2px solid #e8e9ec"></div>
<svg style="left:2218.0px;top:973.5px;" width="24" height="24" viewBox="0 0 24 24" fill="none" stroke="#1f2937" stroke-width="2" stroke-linecap="round" stroke-linejoin="round"><polyline points="15 3 21 3 21 9"/><polyline points="9 21 3 21 3 15"/><line x1="21" x2="14" y1="3" y2="10"/><line x1="3" x2="10" y1="21" y2="14"/></svg>
<div style="left:1670px;top:1015px;width:56px;height:32px;background:#3b64e0;border-radius:16px"></div>
<div style="left:1697px;top:1019px;width:24px;height:24px;background:#fff;border-radius:50%"></div>
<span id="t_i1_reev" class="t" style="left:1741.8px;top:1019.7px;font-size:23px;color:#4a5568;letter-spacing:0.354px;">Re-evaluated on changes to:</span>
<div style="left:2061.5px;top:1010px;width:121.0px;height:42px;border:2px solid #e5e7eb;border-radius:10px"></div>
<span id="t_i1_ref" class="t" style="left:2078.5px;top:1019.3px;font-size:24.5px;color:#2d3748;letter-spacing:0.958px;-webkit-text-stroke:0.5px #2d3748;">a.result</span>
<span id="t_static1" class="t" style="left:1669.5px;top:1065.3px;font-size:24.5px;color:#a0aec0;letter-spacing:0.888px;-webkit-text-stroke:0.6px #a0aec0;">static resource</span>
<span id="t_static2" class="t" style="left:1669.5px;top:1097.1px;font-size:24.5px;color:#a0aec0;letter-spacing:1.068px;-webkit-text-stroke:0.6px #a0aec0;">select only</span>
<div style="left:1910px;top:1077px;width:56px;height:32px;background:#3b64e0;border-radius:16px"></div>
<div style="left:1937px;top:1081px;width:24px;height:24px;background:#fff;border-radius:50%"></div>
<span id="t_resfrom1" class="t" style="left:1981.2px;top:1065.3px;font-size:24.5px;color:#2d3748;letter-spacing:0.824px;-webkit-text-stroke:0.6px #2d3748;">resources from users</span>
<span id="t_resfrom2" class="t" style="left:1981.2px;top:1097.1px;font-size:24.5px;color:#2d3748;letter-spacing:1.143px;-webkit-text-stroke:0.6px #2d3748;">allowed</span>
<svg style="left:2238.0px;top:1081.0px;" width="28" height="28" viewBox="0 0 24 24" fill="none" stroke="#4a5568" stroke-width="1.9" stroke-linecap="round" stroke-linejoin="round"><circle cx="12" cy="12" r="10"/><path d="M12 16v-4"/><path d="M12 8h.01"/></svg>
<span id="t_i2_name" class="t" style="left:1669.7px;top:1184.9px;font-size:22px;color:#2d3748;font-weight:700;letter-spacing:0.660px;">table_name</span>
<span id="t_i2_type" class="t" style="left:1826.6px;top:1183.2px;font-size:24px;color:#4a5568;letter-spacing:1.302px;">string</span>
<div style="left:2034px;top:1157px;width:135.5px;height:55.5px;background:#f3f4f6;border-radius:12px"></div>
<div style="left:2106px;top:1161px;width:60px;height:47.5px;background:#fff;border-radius:10px;box-shadow:0 2px 4px rgba(0,0,0,0.10)"></div>
<svg style="left:2054.0px;top:1170.5px;" width="28" height="28" viewBox="0 0 24 24" fill="none" stroke="#9ca3af" stroke-width="1.8" stroke-linecap="round" stroke-linejoin="round"><path d="M17 3a2.85 2.83 0 1 1 4 4L7.5 20.5 2 22l1.5-5.5Z"/></svg>
<svg style="left:2122.0px;top:1170.5px;" width="28" height="28" viewBox="0 0 24 24" fill="none" stroke="#3b82f6" stroke-width="2" stroke-linecap="round" stroke-linejoin="round"><rect width="18" height="18" x="3" y="3" rx="2" ry="2"/><path d="M9 17c2 0 2.8-1 2.8-2.8V10c0-2 1-3.3 3.2-3"/><path d="M9 11.2h5.7"/></svg>
<div style="left:2186px;top:1157.5px;width:79.5px;height:55.0px;border:2px solid #e5e7eb;border-radius:12px"></div>
<svg style="left:2212.0px;top:1171.0px;" width="28" height="28" viewBox="0 0 24 24" fill="none" stroke="#1f2937" stroke-width="2" stroke-linecap="round" stroke-linejoin="round"><path d="M12 22v-5"/><path d="M9 8V2"/><path d="M15 8V2"/><path d="M18 8v5a4 4 0 0 1-4 4h-4a4 4 0 0 1-4-4V8Z"/></svg>
<div style="left:1670px;top:1221px;width:596px;height:39.5px;background:#fffffe;border:2px solid #e5e7eb"></div>
<div style="left:1672px;top:1223px;width:94px;height:35.5px;background:#f8f9fb"></div>
<div style="left:1766px;top:1223px;width:498px;height:35.5px;border:3.5px solid #efeff0;border-left:0"></div>
<div style="left:2237px;top:1223px;width:27px;height:4px;background:#454545"></div>
<span id="t_i2_ln" class="t" style="left:1723.7px;top:1231.8px;font-size:23.5px;color:#1c2a74;font-family:'Liberation Mono',monospace;-webkit-text-stroke:0.7px #1c2a74;">1</span>
<span id="t_i2_code" class="t" style="left:1766.5px;top:1231.8px;font-size:23.5px;color:#000;font-family:'Liberation Mono',monospace;letter-spacing:0.361px;-webkit-text-stroke:0.4px #000;">b.result</span>
<div style="left:2212.5px;top:1227.5px;width:35.0px;height:35.5px;background:#fff;border:2px solid #e8e9ec"></div>
<svg style="left:2218.0px;top:1233.5px;" width="24" height="24" viewBox="0 0 24 24" fill="none" stroke="#1f2937" stroke-width="2" stroke-linecap="round" stroke-linejoin="round"><polyline points="15 3 21 3 21 9"/><polyline points="9 21 3 21 3 15"/><line x1="21" x2="14" y1="3" y2="10"/><line x1="3" x2="10" y1="21" y2="14"/></svg>
<div style="left:1670px;top:1275px;width:56px;height:32px;background:#3b64e0;border-radius:16px"></div>
<div style="left:1697px;top:1279px;width:24px;height:24px;background:#fff;border-radius:50%"></div>
<span id="t_i2_reev" class="t" style="left:1741.8px;top:1279.7px;font-size:23px;color:#4a5568;letter-spacing:0.354px;">Re-evaluated on changes to:</span>
<div style="left:2061.5px;top:1270px;width:121.0px;height:42px;border:2px solid #e5e7eb;border-radius:10px"></div>
<span id="t_i2_ref" class="t" style="left:2078.5px;top:1279.3px;font-size:24.5px;color:#2d3748;letter-spacing:1.158px;-webkit-text-stroke:0.5px #2d3748;">b.result</span>
<div style="left:1646px;top:1337px;width:644px;height:2px;background:#e5e7eb"></div>
<span id="t_controls" class="t" style="left:1669.5px;top:1375.6px;font-size:25px;color:#2d3748;font-weight:700;letter-spacing:-0.540px;">Controls</span>
<span id="t_showdet" class="t" style="left:2114.3px;top:1376.1px;font-size:24.5px;color:#2d3748;letter-spacing:-0.297px;">Show details</span>
<div style="left:1671px;top:1430px;width:133px;height:42px;border:2px solid #e5e7eb;border-radius:10px"></div>
<span id="t_setvalue" class="t" style="left:1687.2px;top:1439.7px;font-size:24.5px;color:#2d3748;letter-spacing:0.917px;-webkit-text-stroke:0.5px #2d3748;">setValue</span>
<div style="left:1646px;top:1497px;width:644px;height:2px;background:#e5e7eb"></div>
<span id="t_config" class="t" style="left:1669.5px;top:1527.5px;font-size:25px;color:#2d3748;font-weight:700;letter-spacing:-0.314px;">Configuration</span>
<span id="t_title" class="t" style="left:1669.5px;top:1596.9px;font-size:25px;color:#2d3748;font-weight:700;letter-spacing:-0.511px;">Title</span>
<div style="left:2035px;top:1571.5px;width:134.5px;height:55.5px;background:#f3f4f6;border-radius:12px"></div>
<div style="left:2038.5px;top:1575.5px;width:59.5px;height:47.5px;background:#fff;border-radius:10px;box-shadow:0 2px 4px rgba(0,0,0,0.10)"></div>
<svg style="left:2054.0px;top:1585.0px;" width="28" height="28" viewBox="0 0 24 24" fill="none" stroke="#3b82f6" stroke-width="1.8" stroke-linecap="round" stroke-linejoin="round"><path d="M17 3a2.85 2.83 0 1 1 4 4L7.5 20.5 2 22l1.5-5.5Z"/></svg>
<svg style="left:2122.0px;top:1585.0px;" width="28" height="28" viewBox="0 0 24 24" fill="none" stroke="#9ca3af" stroke-width="1.8" stroke-linecap="round" stroke-linejoin="round"><rect width="18" height="18" x="3" y="3" rx="2" ry="2"/><path d="M9 17c2 0 2.8-1 2.8-2.8V10c0-2 1-3.3 3.2-3"/><path d="M9 11.2h5.7"/></svg>
<div style="left:2187px;top:1572px;width:78px;height:54.5px;border:2px solid #e5e7eb;border-radius:12px"></div>
<svg style="left:2212.0px;top:1585.0px;" width="28" height="28" viewBox="0 0 24 24" fill="none" stroke="#1f2937" stroke-width="2" stroke-linecap="round" stroke-linejoin="round"><path d="M12 22v-5"/><path d="M9 8V2"/><path d="M15 8V2"/><path d="M18 8v5a4 4 0 0 1-4 4h-4a4 4 0 0 1-4-4V8Z"/></svg>
<div style="left:1671px;top:1635px;width:594px;height:65px;border:2px solid #d3d6db;border-radius:10px"></div>
<div style="left:413px;top:1151px;width:1239px;height:182px;border:10px solid #ef9a39"></div>
<div style="left:1642px;top:835px;width:641px;height:498px;border:10px solid #ef9a39"></div>
<div style="left:2262px;top:1614px;width:28px;height:28px;background:radial-gradient(circle at 0 0,rgba(0,0,0,0) 27px,#000 28.5px)"></div></body></html>
